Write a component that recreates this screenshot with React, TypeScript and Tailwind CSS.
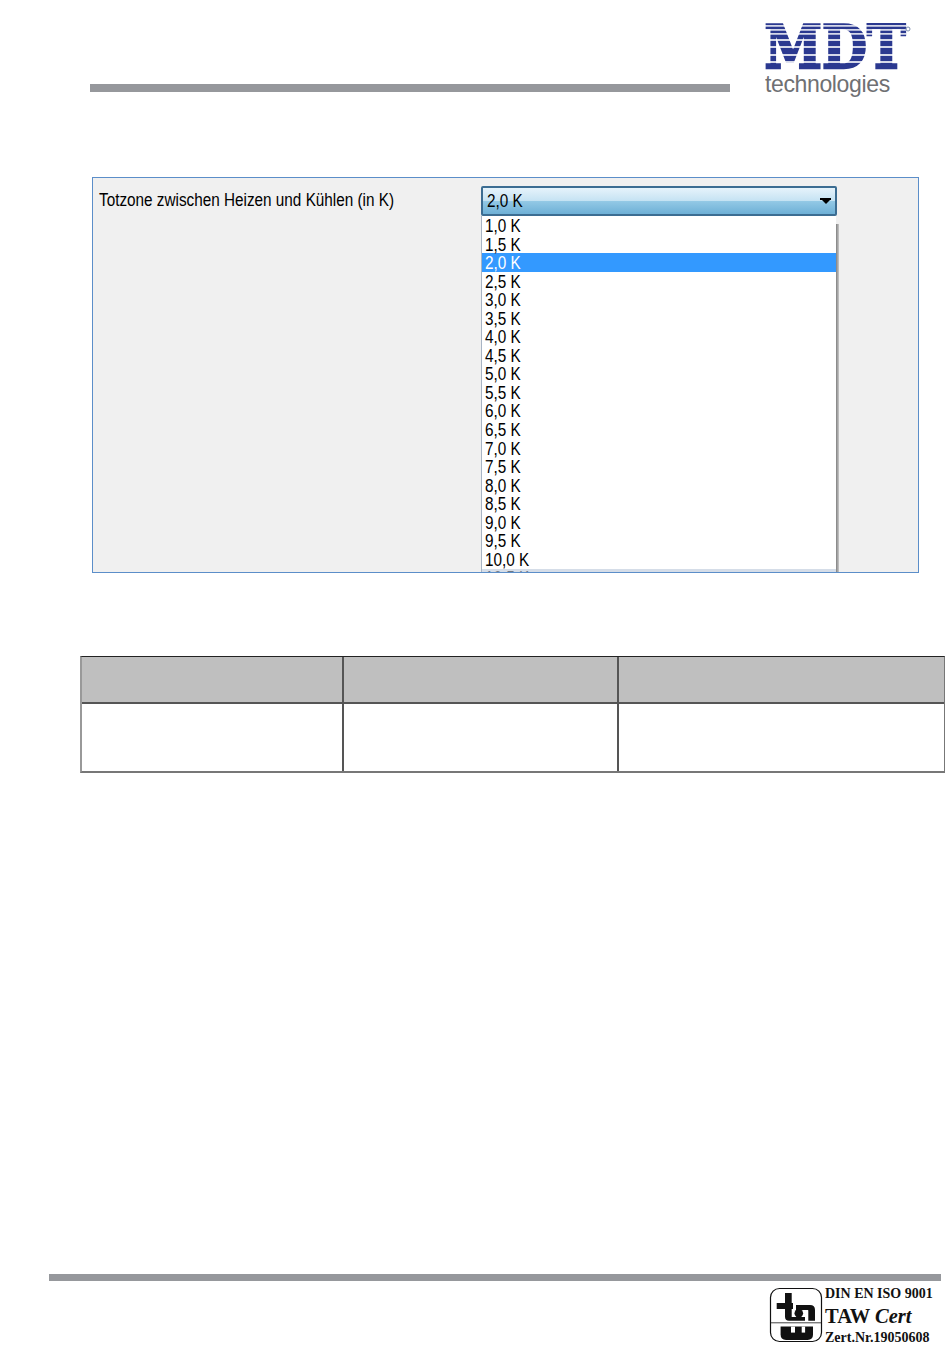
const values = ["1,0 K","1,5 K","2,0 K","2,5 K","3,0 K","3,5 K","4,0 K","4,5 K","5,0 K","5,5 K","6,0 K","6,5 K","7,0 K","7,5 K","8,0 K","8,5 K","9,0 K","9,5 K","10,0 K","10,5 K"];

function MdtLogo() {
  const stripes = [
    [2.2, 1.4], [6.2, 1.4], [10.2, 1.4], [16.2, 1.6], [23.2, 1.6], [31.2, 1.6], [38.2, 1.6],
  ];
  return (
    <svg width="150" height="50" viewBox="0 0 150 50" className="block">
      <text x="-0.5" y="44.8" fontFamily="'DejaVu Serif'" fontWeight="700" fontSize="59" fill="#2b3990" stroke="#2b3990" strokeWidth="2.4" textLength="141" lengthAdjust="spacingAndGlyphs">MDT</text>
      {stripes.map(([y, h]) => (
        <rect key={y} x="0" y={y} width="141" height={h} fill="#ffffff" />
      ))}
      <circle cx="143" cy="6" r="2" fill="none" stroke="#7f8fb0" strokeWidth="1" />
    </svg>
  );
}

function TawLogo() {
  return (
    <svg width="54" height="56" viewBox="0 0 54 56" className="block">
      <rect x="1.5" y="1.5" width="51" height="53" rx="9" fill="#fff" stroke="#111" strokeWidth="1.2" />
      <path d="M2 35.8h50" stroke="#444" strokeWidth="1" />
      <path d="M16 6h6.7v10h1.3v6h-1.3v8h13.3v3.7h-16q-4 0 -4 -4v-7.7h-8.3v-6h8.3z" fill="#111" />
      <path d="M27 18h14q5 0 5 5v10.7h-6.7v-10.2q0 -0.5 -0.5 -0.5h-11.8z" fill="#111" />
      <circle cx="29.8" cy="26.3" r="4.3" fill="#111" />
      <path d="M11.6 39.6h32.4v8q0 5.4 -5.4 5.4h-21.6q-5.4 0 -5.4 -5.4z" fill="#111" />
      <rect x="22" y="39.6" width="4" height="6" fill="#fff" />
      <rect x="32.7" y="39.6" width="3.4" height="6" fill="#fff" />
    </svg>
  );
}

const textFix = "inline-block scale-y-[1.15] translate-y-[1px]";

export default function App() {
  return (
    <div className="w-[950px] h-[1369px] bg-white flex flex-col font-['Liberation_Sans',sans-serif] text-black overflow-hidden">
      <header className="h-[100px] flex items-start">
        <div className="ml-[90px] mt-[84px] w-[640px] h-2 bg-[#96989c]" />
        <div className="ml-[35px] mt-[23px] flex flex-col">
          <MdtLogo />
          <div className="-mt-[2px] text-[24px] leading-[26px] tracking-[-0.4px] text-[#6f7073] [transform:scaleX(0.96)] origin-left">technologies</div>
        </div>
      </header>

      <section className="relative ml-[92px] mt-[77px] w-[827px] h-[396px] bg-[#f0f0f0] border border-[#5b8ec9] text-[15.3px]">
        <div className="absolute left-[6px] top-[11px] leading-5 whitespace-nowrap"><span className={textFix}>Totzone zwischen Heizen und Kühlen (in K)</span></div>
        <div className="absolute left-[388px] top-[8px] w-[356px] h-[30px] rounded-[2px] border-2 border-[#3c6d92] bg-[linear-gradient(#e6f3fb_0%,#c6e3f3_48%,#92c8e5_52%,#6eb0d6_100%)] flex items-center pl-[4px] pb-[2px] leading-5">
          <span className={textFix}>2,0 K</span>
          <span className="absolute right-[4px] top-[10px] flex flex-col items-center">
            <span className="block w-[11px] h-[2px] bg-black" />
            <span className="block w-0 h-0 border-x-[4px] border-x-transparent border-t-[4px] border-t-black" />
          </span>
        </div>
        <div className="absolute left-[388px] top-[38px] w-[355px] h-[356px] bg-white border-l border-[#a8b4c4] overflow-hidden">
          {values.map((v) => (
            <div key={v} className={v === "2,0 K" ? "h-[18.55px] pl-[3px] leading-[18.55px] bg-[#3399ff] text-white" : "h-[18.55px] pl-[3px] leading-[18.55px]"}><span className={textFix}>{v}</span></div>
          ))}
          <div className="absolute left-0 right-0 bottom-0 h-[3px] bg-[#b9c6d8]/60" />
        </div>
        <div className="absolute left-[743px] top-[46px] w-[3px] h-[348px] bg-[linear-gradient(90deg,#808080,#c8c8c8)]" />
      </section>

      <section className="ml-[80px] mt-[83px] w-[865px] h-[117px] grid grid-cols-[262px_275px_1fr] grid-rows-[47px_1fr] border-t border-t-[#222] border-l-2 border-l-[#999] border-b-2 border-b-[#777] border-r border-r-[#777]">
        <div className="bg-[#bfbfbf] border-r-2 border-r-[#555] border-b-2 border-b-[#555]" />
        <div className="bg-[#bfbfbf] border-r-2 border-r-[#555] border-b-2 border-b-[#555]" />
        <div className="bg-[#bfbfbf] border-b-2 border-b-[#555]" />
        <div className="border-r-2 border-r-[#555]" />
        <div className="border-r-2 border-r-[#555]" />
        <div />
      </section>

      <footer className="mt-auto h-[95px] flex flex-col">
        <div className="ml-[49px] w-[892px] h-[7px] bg-[#96989c]" />
        <div className="ml-[769px] mt-[6px] flex gap-[2px]">
          <TawLogo />
          <div className="font-['Liberation_Serif',serif] font-bold text-[14px] text-[#111]">
            <div className="leading-[20px] mt-[-3px]">DIN EN ISO 9001</div>
            <div className="text-[20.5px] leading-[24px]">TAW <span className="italic">Cert</span></div>
            <div className="leading-[20px]">Zert.Nr.19050608</div>
          </div>
        </div>
      </footer>
    </div>
  );
}
